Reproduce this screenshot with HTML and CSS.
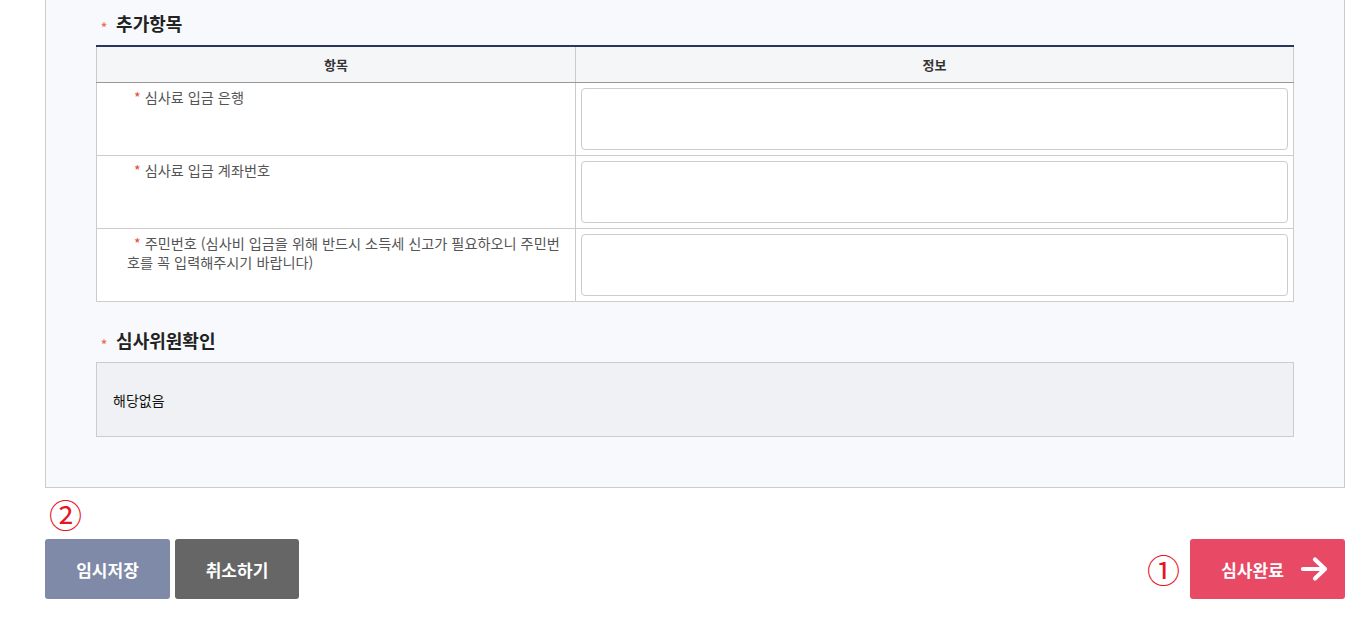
FILE: index.html
```html
<!DOCTYPE html>
<html lang="ko">

<head>
    <meta charset="UTF-8">
    <meta name="viewport" content="width=device-width, initial-scale=1.0">
    <title>심사하기</title>
    <link rel="stylesheet" href="styles.css">
</head>

<body>
<div class="panel">
    <!-- 추가항목 -->
    <h3 class="sec-title"><span class="req">*</span>추가항목</h3>
    <table class="info-table">
        <colgroup>
            <col class="col-item">
            <col>
        </colgroup>
        <thead>
            <tr>
                <th>항목</th>
                <th>정보</th>
            </tr>
        </thead>
        <tbody>
            <tr>
                <td class="label">심사료 입금 은행</td>
                <td class="field"><textarea></textarea></td>
            </tr>
            <tr>
                <td class="label">심사료 입금 계좌번호</td>
                <td class="field"><textarea></textarea></td>
            </tr>
            <tr>
                <td class="label">주민번호 (심사비 입금을 위해 반드시 소득세 신고가 필요하오니 주민번호를 꼭 입력해주시기 바랍니다)</td>
                <td class="field"><textarea></textarea></td>
            </tr>
        </tbody>
    </table>

    <!-- 심사위원확인 -->
    <h3 class="sec-title second"><span class="req">*</span>심사위원확인</h3>
    <div class="confirm-box">해당없음</div>
</div>

<div class="footer">
    <div class="left-group">
        <div class="step">②</div>
        <div class="btn-row">
            <button class="btn btn-save">임시저장</button>
            <button class="btn btn-cancel">취소하기</button>
        </div>
    </div>
    <div class="right-group">
        <span class="step">①</span>
        <button class="btn btn-done">심사완료
            <svg class="arrow" width="30" height="26" viewBox="0 0 30 26">
                <path d="M3 13h22M15 3.5l10 9.5-10 9.5" fill="none" stroke="#fff" stroke-width="4.2" stroke-linecap="round" stroke-linejoin="round"/>
            </svg>
        </button>
    </div>
</div>
</body>

</html>
```

FILE: styles.css
```css
/* 심사 입력 화면 */
body {
    margin: 0;
    font-family: "Noto Sans CJK KR", "Noto Sans", sans-serif;
    color: #333;
    background: #fff;
}

.panel {
    margin-left: 45px;
    width: 1198px;
    padding: 11px 50px 50px;
    background-color: #f7f9fc;
    border: 1px solid #ccc;
    border-top: none;
}

.sec-title {
    height: 24px;
    margin: 0 0 10px;
    padding-left: 5px;
    font-size: 18px;
    line-height: 24px;
    font-weight: bold;
    color: #222;
}

.sec-title .req {
    display: inline-block;
    font-size: 12px;
    line-height: 12px;
    margin-right: 9px;
    vertical-align: -1px;
    color: #ee6b5e;
}

.sec-title.second {
    margin-top: 26px;
}

.info-table {
    width: 100%;
    border-collapse: collapse;
    border-top: 2px solid #2a3560;
    background: #fff;
}

.col-item {
    width: 479px;
}

.info-table th {
    height: 35px;
    padding: 0;
    background-color: #f5f6f8;
    border: 1px solid #ccc;
    border-top: none;
    border-bottom: 1px solid #999;
    font-size: 13px;
    font-weight: bold;
    color: #333;
}

.info-table td {
    border: 1px solid #ccc;
    vertical-align: top;
}

.label {
    padding: 5px 6px 5px 30px;
    text-indent: 7px;
    font-size: 14.2px;
    line-height: 19px;
    color: #555;
    word-break: break-all;
}

/* 필수 표시 */
.label::before {
    content: "*";
    margin-right: 4px;
    color: #e74c3c;
}

.field {
    padding: 5px;
}

.field textarea {
    display: block;
    box-sizing: border-box;
    width: 100%;
    height: 62px;
    margin: 0;
    border: 1px solid #ccc;
    border-radius: 4px;
    resize: none;
    background: #fff;
}

.confirm-box {
    padding: 27px 16px 26px;
    background-color: #f0f1f4;
    border: 1px solid #ccc;
    font-size: 14px;
    line-height: 20px;
    color: #111;
}

.footer {
    display: flex;
    justify-content: space-between;
    align-items: flex-end;
    width: 1300px;
    margin-left: 45px;
}

.step {
    font-family: "Noto Sans CJK KR", sans-serif;
    font-size: 33px;
    line-height: 36px;
    color: #e8141f;
}

.left-group .step {
    margin: 8px 0 7px 4px;
}

.btn-row {
    display: flex;
    gap: 5px;
}

.right-group {
    display: flex;
    align-items: center;
    gap: 10px;
}

.btn {
    height: 60px;
    border: none;
    border-radius: 3px;
    font-family: "Noto Sans CJK KR", sans-serif;
    font-size: 17px;
    font-weight: bold;
    color: #fff;
    cursor: pointer;
}

.btn-save {
    width: 125px;
    background-color: #7f8aa8;
}

.btn-cancel {
    width: 124px;
    background-color: #666;
}

.btn-done {
    display: flex;
    align-items: center;
    justify-content: center;
    gap: 16px;
    width: 155px;
    padding: 0 0 0 16px;
    background-color: #e84a66;
}

.arrow {
    display: block;
}
```
